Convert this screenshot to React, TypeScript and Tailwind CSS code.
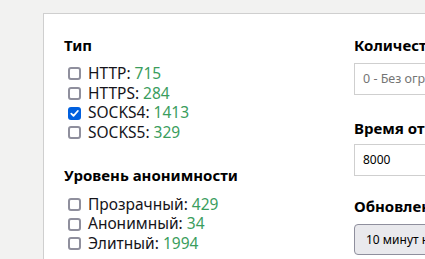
import React from "react";

const font = { fontFamily: '"Noto Sans", "Open Sans", sans-serif' };

function Box({ checked }: { checked?: boolean }) {
  if (checked) {
    return (
      <span className="w-[13px] h-[13px] shrink-0 ml-[4px] mr-[7px] rounded-[3px] bg-[#0060df] flex items-center justify-center">
        <svg width="9" height="9" viewBox="0 0 9 9" fill="none">
          <path d="M1.3 4.6 L3.5 6.8 L7.8 2" stroke="white" strokeWidth="1.8" strokeLinecap="round" strokeLinejoin="round" />
        </svg>
      </span>
    );
  }
  return <span className="w-[13px] h-[13px] shrink-0 ml-[4px] mr-[7px] rounded-[3px] border-2 border-[#8f8f9d] bg-white" />;
}

function Item({ label, count, checked }: { label: string; count: number; checked?: boolean }) {
  return (
    <label className="flex items-center h-[19.67px] leading-[19.67px] text-[15.5px] text-[#15141a] whitespace-nowrap">
      <Box checked={checked} />
      <span>
        {label}: <span className="text-[#3a9d5d]">{count}</span>
      </span>
    </label>
  );
}

export default function App() {
  return (
    <div className="w-[425px] h-[259px] overflow-hidden bg-[#f2f2f1] pt-[13px] pl-[43px]" style={font}>
      <div className="w-[420px] h-[300px] bg-white border border-[#cfcfcf] flex pt-[21px] pl-[20px]">
        <div className="w-[290px] shrink-0">
          <div className="text-[15px] font-bold leading-[20px] text-black">Тип</div>
          <div className="mt-[9px]">
            <Item label="HTTP" count={715} />
            <Item label="HTTPS" count={284} />
            <Item label="SOCKS4" count={1413} checked />
            <Item label="SOCKS5" count={329} />
          </div>
          <div className="text-[15px] font-bold leading-[20px] text-black mt-[22px]">Уровень анонимности</div>
          <div className="mt-[10px]">
            <Item label="Прозрачный" count={429} />
            <Item label="Анонимный" count={34} />
            <Item label="Элитный" count={1994} />
          </div>
        </div>
        <div className="shrink-0 w-[200px]">
          <div className="text-[15px] font-bold leading-[20px] text-black whitespace-nowrap">Количество прокси</div>
          <div className="mt-[8px] h-[32px] border border-[#cfcfcf] flex items-center px-[8px] text-[12.5px] text-[#757575] whitespace-nowrap">
            0 - Без ограничений
          </div>
          <div className="text-[15px] font-bold leading-[20px] text-black mt-[23px] whitespace-nowrap">Время отклика</div>
          <div className="mt-[6px] h-[32px] border border-[#cfcfcf] flex items-center px-[8px] text-[12px] text-black">
            8000
          </div>
          <div className="text-[15px] font-bold leading-[20px] text-black mt-[20px] whitespace-nowrap">Обновление</div>
          <div className="mt-[8px] h-[31px] w-[160px] border border-[#8f8f9d] rounded-[4px] bg-[#e9e9ed] flex items-center px-[11px] text-[12px] text-black whitespace-nowrap">
            10 минут назад
          </div>
        </div>
      </div>
    </div>
  );
}
